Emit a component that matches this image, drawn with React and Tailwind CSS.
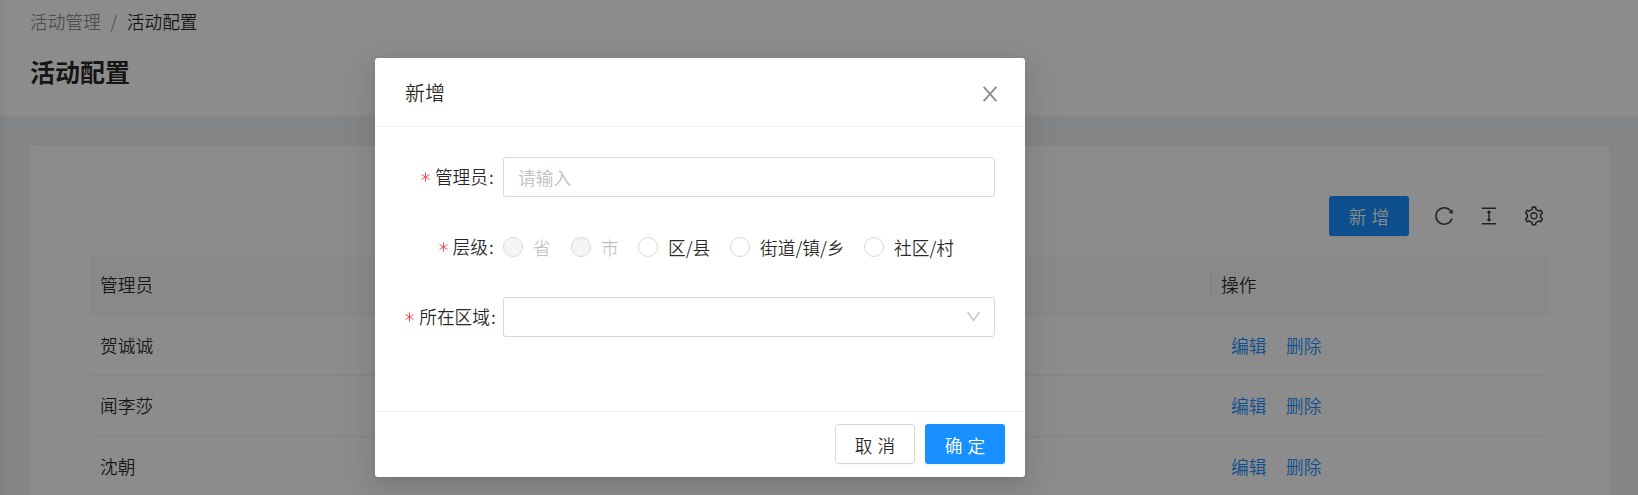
import React from "react";
import {
  AiOutlineReload,
  AiOutlineColumnHeight,
  AiOutlineSetting,
} from "react-icons/ai";

const rows = ["贺诚诚", "闻李莎", "沈朝"];

const levels = [
  { name: "省", disabled: true, width: "w-[68px]" },
  { name: "市", disabled: true, width: "w-[67px]" },
  { name: "区/县", disabled: false, width: "w-[92px]" },
  { name: "街道/镇/乡", disabled: false, width: "w-[134px]" },
  { name: "社区/村", disabled: false, width: "w-[100px]" },
];

function CloseIcon({ className }) {
  return (
    <svg viewBox="0 0 20 20" className={className} fill="none" stroke="currentColor" strokeWidth="1.9">
      <path d="M3.7 2.8 16.3 17.2M16.3 2.8 3.7 17.2" />
    </svg>
  );
}

function DownIcon({ className }) {
  return (
    <svg viewBox="0 0 15 15" className={className} fill="none" stroke="currentColor" strokeWidth="1.4">
      <path d="M1.6 3.2 7.5 11.3 13.4 3.2" />
    </svg>
  );
}

function Asterisk() {
  return (
    <svg viewBox="0 0 9 10" className="mr-[5px] h-[10px] w-[9px] shrink-0" fill="none" stroke="#ff4d4f" strokeWidth="1">
      <path d="M4.5 0.3V9.7M0.5 2.6 8.5 7.4M8.5 2.6 0.5 7.4" />
    </svg>
  );
}

function Page() {
  return (
    <div className="flex h-full flex-col">
      <header className="h-[116px] shrink-0 bg-white px-[30px] pt-[7px]">
        <nav className="flex h-7 items-center">
          <span className="text-black/45">活动管理</span>
          <span className="w-[26px] text-center text-black/45">/</span>
          <span>活动配置</span>
        </nav>
        <h1 className="mt-4 flex h-10 items-center text-[25px] font-bold">活动配置</h1>
      </header>
      <main className="min-h-0 flex-1 pt-[30px] pr-[29px] pl-[30px]">
        <section className="h-[500px] rounded-[3px] bg-white px-[60px] pt-[50px]">
          <div className="flex h-10 items-center justify-end pr-1">
            <button className="mr-6 flex h-10 w-20 items-center justify-center rounded-[3px] bg-[#1890ff] pl-[5px] tracking-[5px] text-white shadow-[0_2px_0_rgba(0,0,0,0.045)]">
              新增
            </button>
            <AiOutlineReload className="mr-[23px] size-[22px] text-black/75" />
            <AiOutlineColumnHeight className="mr-[23px] size-[22px] text-black/75" />
            <AiOutlineSetting className="size-[22px] text-black/75" />
          </div>
          <div className="mt-5">
            <div className="flex h-[58px] items-center rounded-t-[3px] border-b border-[#f0f0f0] bg-[#fafafa] pl-2.5">
              <span className="w-[1110px]">管理员</span>
              <span className="flex h-7 items-center border-l-2 border-[#f0f0f0] pl-[9px]">操作</span>
            </div>
            {rows.map((name, i) => (
              <div
                key={name}
                className={`flex items-center border-b border-[#f0f0f0] pl-2.5 ${i === 0 ? "h-[62px] pt-px" : "h-[61px] pb-px"}`}
              >
                <span className="w-[1131px]">{name}</span>
                <a className="w-[55px] text-[#1890ff]">编辑</a>
                <a className="text-[#1890ff]">删除</a>
              </div>
            ))}
          </div>
        </section>
      </main>
    </div>
  );
}

function Field({ label, labelClass, className, children }) {
  return (
    <div className={`flex h-10 items-center ${className}`}>
      <div className={`flex w-[98px] shrink-0 items-center justify-end pb-px whitespace-nowrap ${labelClass}`}>
        <Asterisk />
        <span>{label}</span>
        <span className="ml-px w-[5px]">:</span>
      </div>
      {children}
    </div>
  );
}

function CreateModal() {
  return (
    <div className="flex h-[419px] w-[650px] flex-col rounded-[3px] bg-white shadow-[0_4px_8px_-5px_rgba(0,0,0,0.12),0_8px_20px_rgba(0,0,0,0.08),0_11px_35px_10px_rgba(0,0,0,0.05)]">
      <div className="flex h-[69px] shrink-0 items-center justify-between border-b border-[#f0f0f0] pr-[25px] pl-[30px]">
        <span className="text-[20px]">新增</span>
        <CloseIcon className="mt-1 size-5 text-black/45" />
      </div>
      <div className="min-h-0 flex-1 px-[30px] pt-[30px]">
        <Field label="管理员" labelClass="pr-[9px]">
          <div className="flex h-10 flex-1 items-center rounded-[3px] border border-[#d9d9d9] pl-[14px] text-[#bfbfbf]">
            请输入
          </div>
        </Field>
        <Field label="层级" labelClass="pr-[9px]" className="mt-[30px]">
          {levels.map((l) => (
            <label key={l.name} className={`flex shrink-0 items-center gap-2.5 whitespace-nowrap ${l.width}`}>
              <span
                className={`size-5 shrink-0 rounded-full border border-[#d9d9d9] ${l.disabled ? "bg-[#f5f5f5]" : "bg-white"}`}
              />
              <span className={l.disabled ? "text-black/25" : ""}>{l.name}</span>
            </label>
          ))}
        </Field>
        <Field label="所在区域" labelClass="pr-[7px]" className="mt-[30px]">
          <div className="flex h-10 flex-1 items-center justify-end rounded-[3px] border border-[#d9d9d9] pr-[13px] pb-px">
            <DownIcon className="size-[15px] text-black/25" />
          </div>
        </Field>
      </div>
      <div className="flex h-[66px] shrink-0 items-start justify-end gap-2.5 border-t border-[#f0f0f0] pt-3 pr-5">
        <button className="flex h-10 w-20 items-center justify-center rounded-[3px] border border-[#d9d9d9] bg-white pt-[2px] pl-[5px] tracking-[5px] shadow-[0_2px_0_rgba(0,0,0,0.016)]">
          取消
        </button>
        <button className="flex h-10 w-20 items-center justify-center rounded-[3px] bg-[#1890ff] pt-[2px] pl-[5px] tracking-[5px] text-white shadow-[0_2px_0_rgba(0,0,0,0.045)]">
          确定
        </button>
      </div>
    </div>
  );
}

export default function App() {
  return (
    <div className="relative h-[495px] w-full overflow-hidden bg-[#f0f2f5] font-['Noto_Sans_CJK_SC',sans-serif] text-[17.7px] leading-[27px] font-[350] text-black/85">
      <Page />
      <div className="absolute inset-y-0 left-0 w-2.5 bg-linear-to-r from-black/4 to-transparent" />
      <div className="absolute inset-0 flex items-start bg-black/45 pt-[58px] pl-[375px]">
        <CreateModal />
      </div>
    </div>
  );
}
